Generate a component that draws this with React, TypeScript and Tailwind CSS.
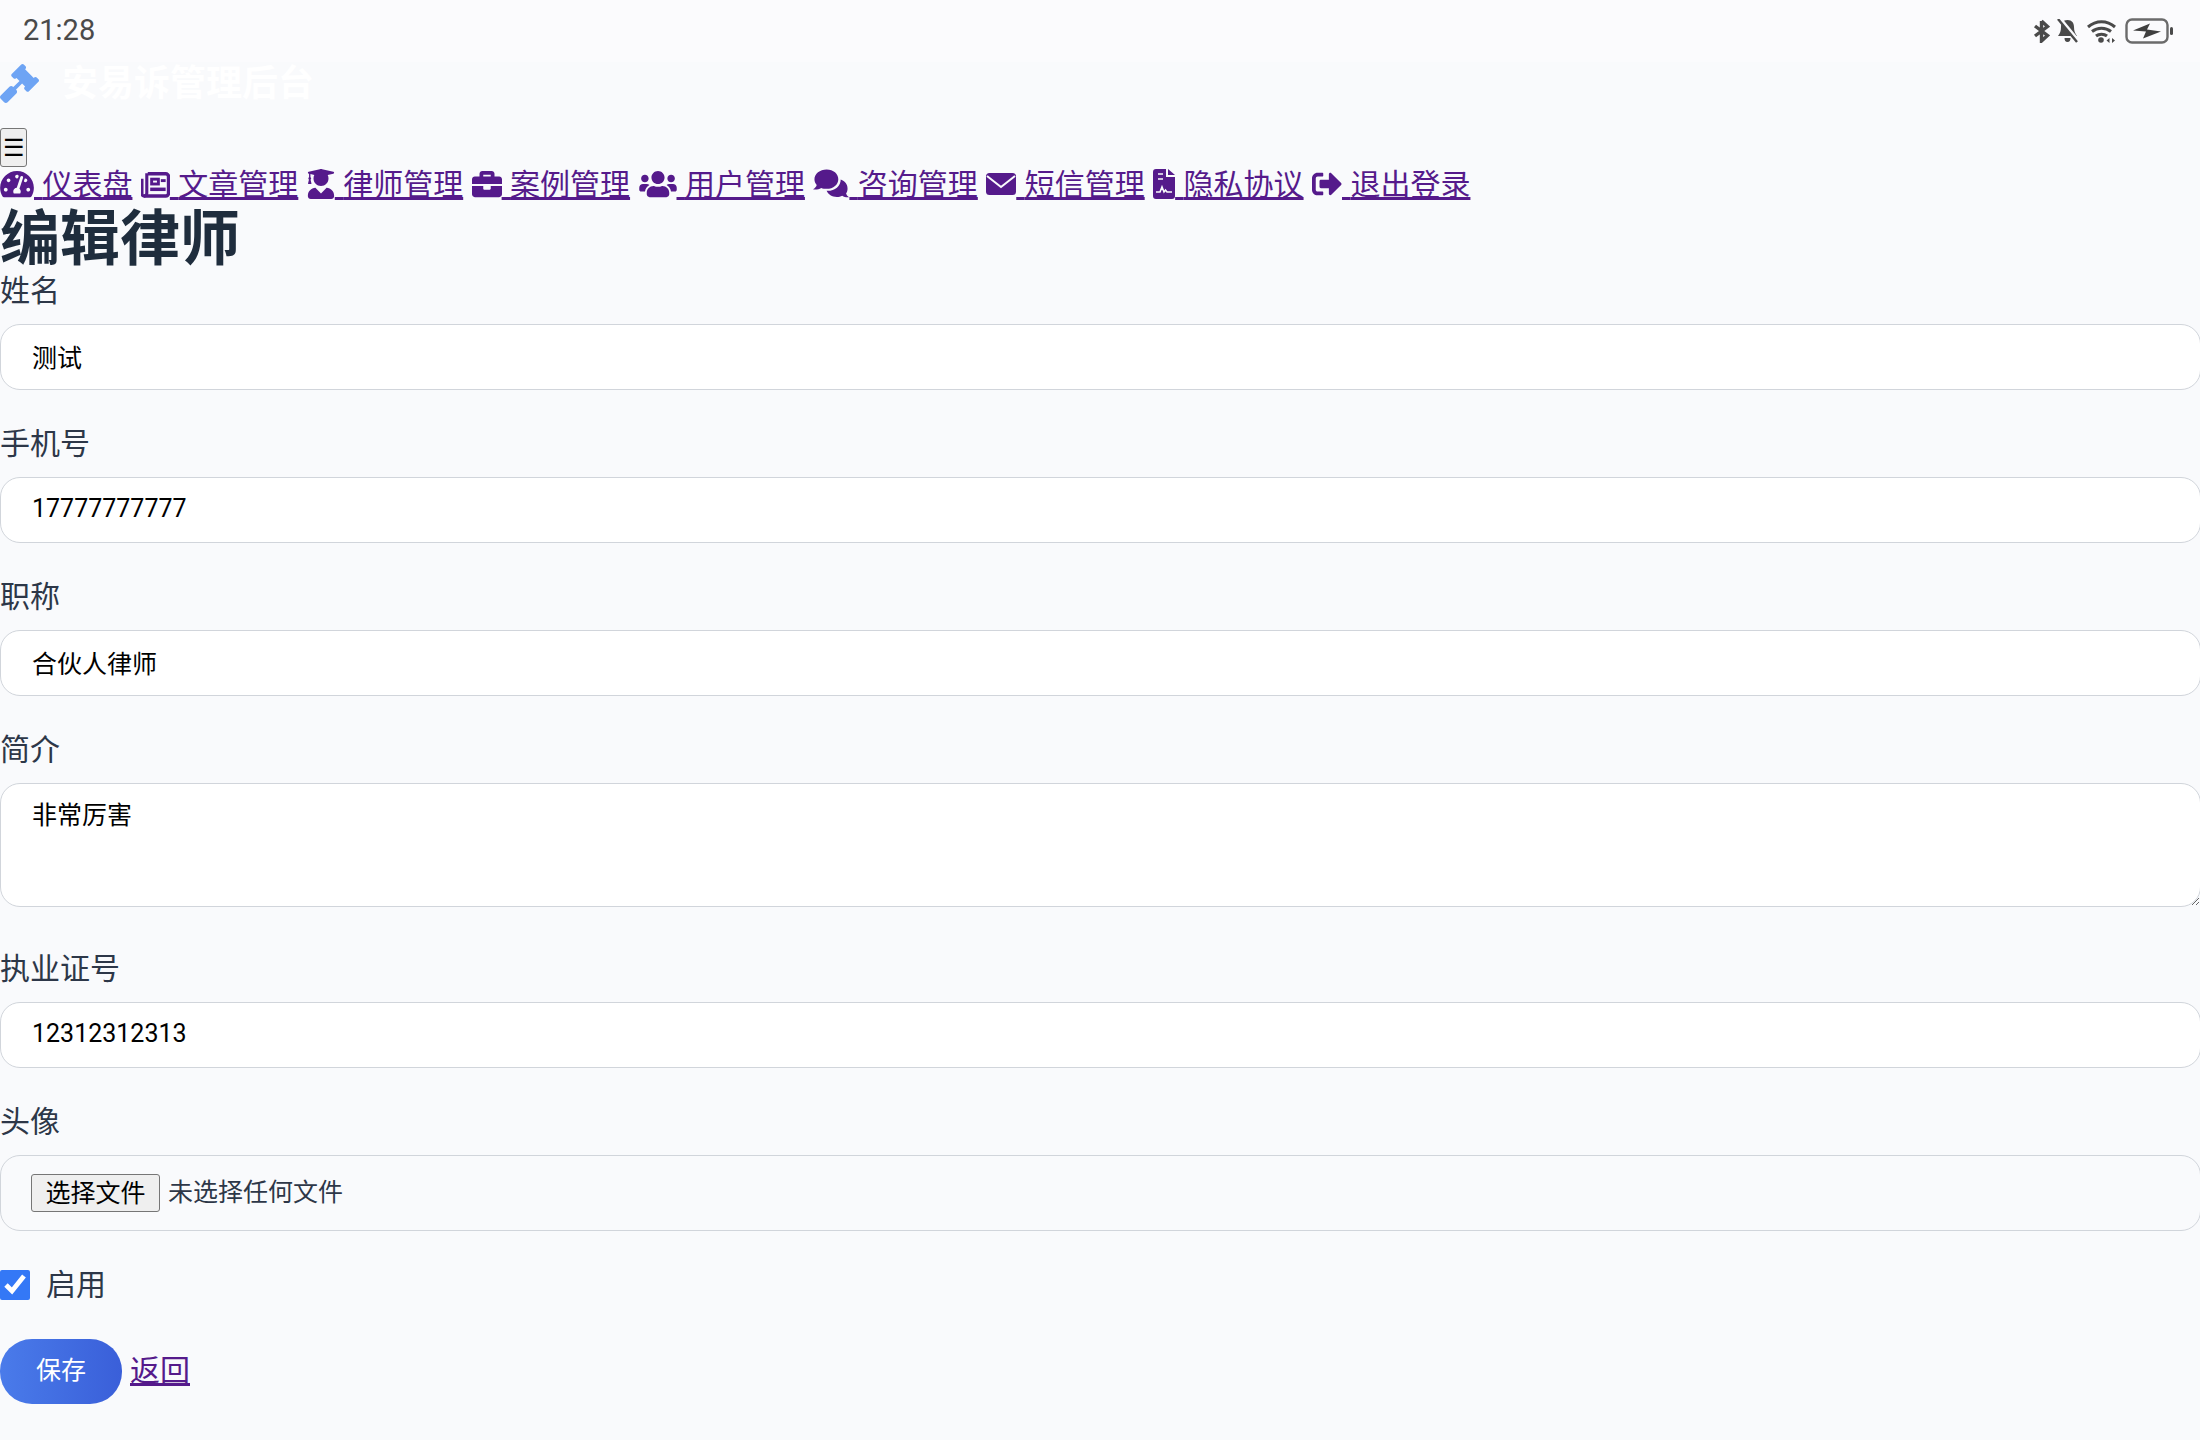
import type { ReactNode } from "react";
import {
  FaBriefcase,
  FaGavel,
  FaSignOutAlt,
  FaTachometerAlt,
  FaUserGraduate,
  FaUsers,
} from "react-icons/fa";

const FONT = "font-['Inter','Noto_Sans_CJK_SC',sans-serif]";
const INPUT_FONT = "font-['Roboto','Noto_Sans_CJK_SC',sans-serif]";

const navIcon = "inline-block h-[30px] align-[-4px]";

interface NavItem {
  label: string;
  icon: ReactNode;
}

const navItems: NavItem[] = [
  { label: "仪表盘", icon: <FaTachometerAlt className={`${navIcon} w-[34px]`} /> },
  {
    label: "文章管理",
    icon: (
      <svg viewBox="0 0 30 30" fill="none" stroke="currentColor" className={`${navIcon} w-[29px]`}>
        <path d="M7 4.500h18.500a3 3 0 0 1 3 3v17a3 3 0 0 1-3 3H3" strokeWidth="3.600" />
        <path d="M6 4v20.500a3 3 0 0 1-3 3 2.500 2.500 0 0 1-2-2.500V9.500" strokeWidth="3.200" />
        <rect x="11" y="10" width="7" height="5" strokeWidth="3" />
        <path d="M9.500 20.500h16" strokeWidth="3.600" />
        <path d="M20.500 11.500h5" strokeWidth="3" />
      </svg>
    ),
  },
  { label: "律师管理", icon: <FaUserGraduate className={`${navIcon} w-[28px]`} /> },
  { label: "案例管理", icon: <FaBriefcase className={`${navIcon} w-[30px]`} /> },
  { label: "用户管理", icon: <FaUsers className={`${navIcon} w-[38px]`} /> },
  {
    label: "咨询管理",
    icon: (
      <svg viewBox="0 0 37 30" fill="currentColor" className={`${navIcon} w-[36px]`}>
        <path d="M14 0c7 0 12 4.500 12 10s-5 10-12 10c-2 0-4-.4-5.500-1C6 20.500 3 21 0 20.500c2-1 3.500-3 3.800-4.500C2.500 14.400 1.500 12.300 1.500 10 1.500 4.500 7 0 14 0z" />
        <path d="M28.500 10.500c4.500 1.500 7 5 7 9 0 2-.5 3.800-1.500 5 .3 1.500 1.300 3 3 4-2.500.3-5-.2-7-1.500-1.500.8-3.500 1.300-5.500 1.300-5 0-9-2.500-10.500-6.300 8 .5 14.500-4.500 14.500-12z" />
      </svg>
    ),
  },
  {
    label: "短信管理",
    icon: (
      <svg viewBox="0 0 30 30" className={`${navIcon} w-[30px]`}>
        <rect x="0" y="4" width="30" height="22" rx="3.500" fill="currentColor" />
        <path d="M1 7l14 11L29 7" fill="none" stroke="#f9fafc" strokeWidth="2" />
      </svg>
    ),
  },
  {
    label: "隐私协议",
    icon: (
      <svg viewBox="0 0 22 30" className={`${navIcon} w-[22px]`}>
        <path d="M3 0h10v8h9v19a3 3 0 0 1-3 3H3a3 3 0 0 1-3-3V3a3 3 0 0 1 3-3z" fill="currentColor" />
        <path d="M15 0l7 6h-7z" fill="currentColor" />
        <path d="M5 5h5M5 10h5" stroke="#f9fafc" strokeWidth="1.600" fill="none" />
        <path d="M3 23h4l2-5 2 5 1.500-2 1.500 2h5" stroke="#f9fafc" strokeWidth="1.600" fill="none" />
      </svg>
    ),
  },
  { label: "退出登录", icon: <FaSignOutAlt className={`${navIcon} w-[30px]`} /> },
];

function StatusIcons() {
  return (
    <div className="flex items-center text-[#4a4a4a]">
      {/* bluetooth */}
      <svg width="17" height="24" viewBox="0 0 17 24" fill="none" stroke="currentColor" className="mr-[7px]">
        <path d="M8.500 2v20l6-5.500L2 7M8.500 2l6 5.500L2 17" strokeWidth="3.400" />
      </svg>
      {/* muted bell */}
      <svg width="21" height="24" viewBox="0 0 21 24" fill="currentColor" className="mr-[9px]">
        <path d="M10.500 1c4.500 0 6.500 3 6.500 7 0 4 1 6.500 3 9H1c2-2.500 3-5 3-9 0-4 2-7 6.500-7zM7.500 19h6c0 2.500-1 4-3 4s-3-1.500-3-4z" />
        <path d="M3 0l19 23" stroke="#fbfbfd" strokeWidth="4" />
        <path d="M1 0l19 23" stroke="currentColor" strokeWidth="2.400" />
      </svg>
      {/* wifi */}
      <svg width="29" height="24" viewBox="0 0 29 24" fill="none" stroke="currentColor" strokeWidth="3" className="mr-[9px]">
        <path d="M1 8c8-7 19-7 27 0M5 12.500c5.500-4.500 13.500-4.500 19 0M9 17c3-2.500 8-2.500 11 0" />
        <circle cx="14" cy="21" r="2.800" fill="currentColor" stroke="none" />
        <path d="M22.500 19l-3 2.500 3 2.500zM25 19l3 2.500-3 2.500z" fill="currentColor" stroke="none" />
      </svg>
      {/* battery */}
      <svg width="48" height="26" viewBox="0 0 48 26" fill="none">
        <rect x="1.500" y="1.500" width="41" height="23" rx="5.500" stroke="#6b6b6b" strokeWidth="2.400" />
        <path d="M8 12.500l17-7-3 6 14 2-18 7 3-7z" fill="#3f3f3f" />
        <rect x="45" y="9" width="3" height="8" rx="1.500" fill="currentColor" />
      </svg>
    </div>
  );
}

function FieldLabel({ children }: { children: ReactNode }) {
  return <label className="mb-[12px] block text-[30px] leading-[43px] text-[#2d3748]">{children}</label>;
}

function Field({ label, value }: { label: string; value: string }) {
  return (
    <div className="mb-[32px]">
      <FieldLabel>{label}</FieldLabel>
      <input
        type="text"
        defaultValue={value}
        className={`block h-[66px] w-[2201px] rounded-[20px] border border-[#d1d5db] bg-white px-[31px] pb-[3px] text-[25px] text-black outline-none ${INPUT_FONT}`}
      />
    </div>
  );
}

export default function App() {
  return (
    <div className={`min-h-[1440px] overflow-hidden bg-[#f9fafc] ${FONT}`}>
      <div className="flex h-[62px] items-center justify-between bg-[#fbfbfd] pl-[23px] pr-[27px]">
        <span className="font-['Roboto',sans-serif] text-[29px] text-[#4a4a4a]">21:28</span>
        <StatusIcons />
      </div>

      <div className="flex h-[42px] items-center">
        <FaGavel className="h-[39px] w-[39px] text-[#6ea4f4]" />
        <span className="ml-[23px] text-[36px] font-bold text-white">安易诉管理后台</span>
      </div>

      <button className="mt-[24px] block h-[39px] w-[27px] rounded-[3px] border border-[#767676] bg-[#efefef] text-[24px] leading-none text-black">
        ☰
      </button>

      <nav className="h-[33px] text-[30px] leading-[35px] text-[#551a8b]">
        {navItems.map(({ label, icon }) => (
          <span key={label}>
            <a href="#" className="underline">
              {icon} {label}
            </a>{" "}
          </span>
        ))}
      </nav>

      <h1 className="mt-[7px] text-[60px] leading-[62px] font-bold text-[#1f2d3d]">编辑律师</h1>

      <Field label="姓名" value="测试" />
      <Field label="手机号" value="17777777777" />
      <Field label="职称" value="合伙人律师" />

      <div className="mb-[40px]">
        <FieldLabel>简介</FieldLabel>
        <textarea
          defaultValue="非常厉害"
          className={`block h-[124px] w-[2201px] rounded-[20px] border border-[#d1d5db] bg-white px-[31px] py-[13px] text-[25px] text-black outline-none ${INPUT_FONT}`}
        />
      </div>

      <Field label="执业证号" value="12312312313" />

      <div className="mb-[39px]">
        <FieldLabel>头像</FieldLabel>
        <div className="flex h-[76px] w-[2201px] items-center rounded-[20px] border border-[#d1d5db] pl-[30px]">
          <button className="h-[38px] w-[129px] rounded-[3px] border border-[#767676] bg-[#efefef] text-[25px] leading-none text-black">
            选择文件
          </button>
          <span className="ml-[8px] text-[25px] text-[#2d3748]">未选择任何文件</span>
        </div>
      </div>

      <div className="flex h-[30px] items-center">
        <input type="checkbox" defaultChecked className="m-0 h-[30px] w-[30px] accent-[#3478f6]" />
        <span className="ml-[16px] pb-[2px] text-[30px] text-[#2d3748]">启用</span>
      </div>

      <div className="mt-[39px] flex items-center">
        <button className="h-[65px] w-[122px] rounded-[32px] bg-gradient-to-r from-[#4a7bea] to-[#3a5fd9] pb-[2px] text-[25px] text-white">
          保存
        </button>
        <a href="#" className="ml-[8px] pb-[3px] text-[30px] text-[#551a8b] underline">
          返回
        </a>
      </div>
    </div>
  );
}
